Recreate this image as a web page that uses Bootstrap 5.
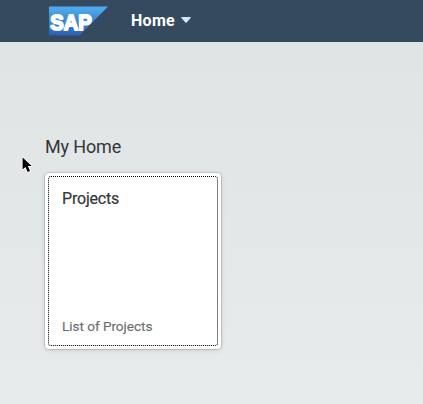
<!DOCTYPE html>
<html lang="en">
<head>
<meta charset="utf-8">
<meta name="viewport" content="width=device-width, initial-scale=1">
<title>Home</title>
<link href="https://cdn.jsdelivr.net/npm/bootstrap@5.3.0/dist/css/bootstrap.min.css" rel="stylesheet">
<style>
body{font-family:Roboto,"Liberation Sans",sans-serif;background:linear-gradient(#dfe4e4 42px,#e7ebec 404px);color:#32363a;overflow:hidden}
.shell-bar{height:42px;background:#354a5f;padding:0 0 0 49px}
.shell-logo{width:59px;height:30px;margin-top:-1px}
.shell-title{font-size:16px;line-height:22px;font-weight:700;width:44px;margin-left:23px;margin-top:-1px;letter-spacing:.3px}
.shell-arrow{width:10px;height:6px;margin-left:6px;margin-top:-2px}
.launchpad{padding:93px 0 0 45px}
.group-title{font-size:18px;line-height:24px;margin-bottom:14px;letter-spacing:-.15px}
.tile{width:176px;height:176px;padding:3px;border-radius:4px;box-shadow:0 0 0 1px rgba(0,0,0,.12),0 1px 5px rgba(0,0,0,.15)}
.tile-focus{border:1px dotted #000;border-radius:3px;padding:11px 13px 9px}
.tile-title{font-size:16px;line-height:22px;letter-spacing:-.2px;-webkit-text-stroke:.2px}
.tile-sub{font-size:13.6px;line-height:20px;color:#6a6d70;letter-spacing:-.05px;-webkit-text-stroke:.15px}
.pointer{left:20px;top:155px;width:14px;height:20px}
</style>
<script src="https://cdn.jsdelivr.net/npm/bootstrap@5.3.0/dist/js/bootstrap.bundle.min.js"></script>
</head>
<body class="vh-100 position-relative">
<header class="shell-bar d-flex align-items-center text-white">
<svg class="shell-logo" viewBox="0 0 59 30" role="img" aria-label="SAP">
<defs><linearGradient id="logo-blue" x2="0" y2="1"><stop offset="0" stop-color="#51aef0"/><stop offset="1" stop-color="#2860b5"/></linearGradient></defs>
<path d="M0 .5H59L30.5 29.5H0Z" fill="url(#logo-blue)"/>
<text x="1.3" y="23.5" font-family="Liberation Sans,sans-serif" font-weight="700" font-size="22.5" textLength="41.5" lengthAdjust="spacingAndGlyphs" fill="#fff" stroke="#fff" stroke-width="1.9" stroke-linejoin="round">SAP</text>
</svg>
<span class="shell-title">Home</span>
<svg class="shell-arrow" viewBox="0 0 10 6"><path d="M.6 0H9.4Q10 .3 9.6 1L5.6 5.6Q5 6.1 4.4 5.6L.4 1Q0 .3 .6 0Z" fill="#d1e8ff"/></svg>
</header>
<main class="launchpad">
<h1 class="group-title fw-normal">My Home</h1>
<a href="#" class="tile d-block bg-white text-decoration-none text-reset">
<div class="tile-focus d-flex flex-column justify-content-between h-100">
<span class="tile-title">Projects</span>
<span class="tile-sub">List of Projects</span>
</div>
</a>
</main>
<svg class="pointer position-absolute" viewBox="0 0 14 20"><path d="M2.6 2.5V14.5L5.4 12L7.7 17L10 16L7.8 11.1H11.7Z" fill="#000" stroke="#fff" stroke-width="1.6" paint-order="stroke" stroke-linejoin="round"/></svg>
</body>
</html>
